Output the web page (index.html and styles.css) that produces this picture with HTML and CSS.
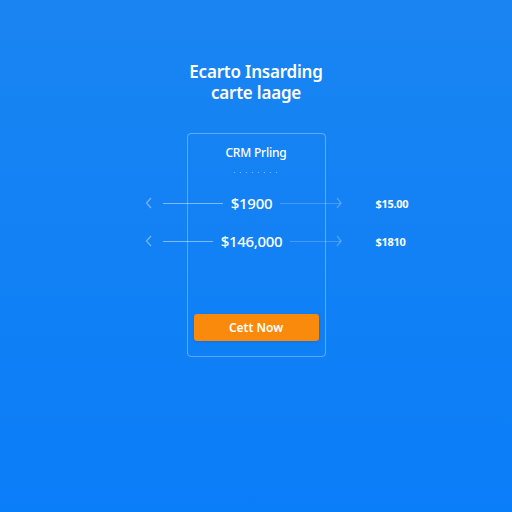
FILE: index.html
```html
<html lang="en">
<head>
  <meta charset="UTF-8">
  <meta name="viewport" content="width=device-width, initial-scale=1.0">
  <title>CRM Pricing</title>
  <link rel="stylesheet" href="styles.css">
</head>
<body>
  <main class="page">
    <h1 class="headline">Ecarto Insarding<br>carte laage</h1>

    <!-- Pricing card -->
    <section class="card">
      <h2 class="card-title">CRM Prling</h2>
      <div class="dots"></div>

      <div class="price-rows">
        <div class="price-row">
          <svg class="chev" width="8" height="12" viewBox="0 0 8 12"><path d="M6 1 L1.5 6 L6 11" /></svg>
          <span class="line"></span>
          <span class="amount">$1900</span>
          <span class="line faint"></span>
          <svg class="arrow" width="6" height="12" viewBox="0 0 6 12"><path d="M1 1 L5 6 L1 11" /></svg>
          <span class="side-price">$15.00</span>
        </div>
        <div class="price-row">
          <svg class="chev" width="8" height="12" viewBox="0 0 8 12"><path d="M6 1 L1.5 6 L6 11" /></svg>
          <span class="line"></span>
          <span class="amount">$146,000</span>
          <span class="line faint"></span>
          <svg class="arrow" width="6" height="12" viewBox="0 0 6 12"><path d="M1 1 L5 6 L1 11" /></svg>
          <span class="side-price">$1810</span>
        </div>
      </div>

      <button class="cta">Cett Now</button>
    </section>
  </main>
</body>
</html>
```

FILE: styles.css
```css
* {
  margin: 0;
  padding: 0;
  box-sizing: border-box;
  font-family: 'Noto Sans', 'Open Sans', sans-serif;
}
body {
  background: linear-gradient(180deg, #1a85f2, #0a7df8);
  color: #fff;
  height: 512px;
  overflow: hidden;
}
.page {
  display: flex;
  flex-direction: column;
  align-items: center;
  padding-top: 61px;
}
.headline {
  font-size: 17px;
  font-weight: 600;
  line-height: 21px;
  text-align: center;
  letter-spacing: -0.2px;
}
.card {
  margin-top: 30px;
  width: 139px;
  height: 224px;
  border: 1px solid rgba(255, 255, 255, 0.32);
  border-radius: 4px;
  padding: 11px 6px 15px;
  display: flex;
  flex-direction: column;
  align-items: center;
}
.card-title {
  font-size: 12px;
  font-weight: 500;
  line-height: 16px;
  letter-spacing: -0.2px;
}
/* dotted divider under the title */
.dots {
  margin-top: 11px;
  width: 44px;
  height: 1px;
  background-image: linear-gradient(to right, rgba(255, 255, 255, 0.45) 1px, transparent 1px);
  background-size: 6px 1px;
}
.price-rows {
  margin-top: 20px;
  align-self: flex-start;
  margin-left: -49px;
  width: 265px;
  display: flex;
  flex-direction: column;
  gap: 18px;
}
.price-row {
  display: flex;
  align-items: center;
  height: 20px;
}
.chev {
  fill: none;
  stroke: rgba(255, 255, 255, 0.4);
  stroke-width: 1.3;
  margin-right: 10px;
}
.line {
  flex: 1;
  height: 1px;
  background: rgba(255, 255, 255, 0.45);
}
.line.faint {
  background: rgba(255, 255, 255, 0.2);
}
.arrow {
  fill: none;
  stroke: rgba(255, 255, 255, 0.25);
  stroke-width: 1.3;
  margin-left: -5px;
}
.amount {
  font-size: 15px;
  font-weight: 500;
  margin: 0 8px;
  letter-spacing: -0.3px;
}
.side-price {
  margin-left: 34px;
  width: 34px;
  font-size: 11px;
  font-weight: 700;
  letter-spacing: -0.3px;
}
.cta {
  margin-top: auto;
  width: 100%;
  height: 27px;
  border: none;
  border-radius: 3px;
  background: #fa8a0b;
  color: #fff;
  font-size: 12px;
  font-weight: 600;
  box-shadow: 0 1px 3px rgba(0, 0, 0, 0.12);
}
```
